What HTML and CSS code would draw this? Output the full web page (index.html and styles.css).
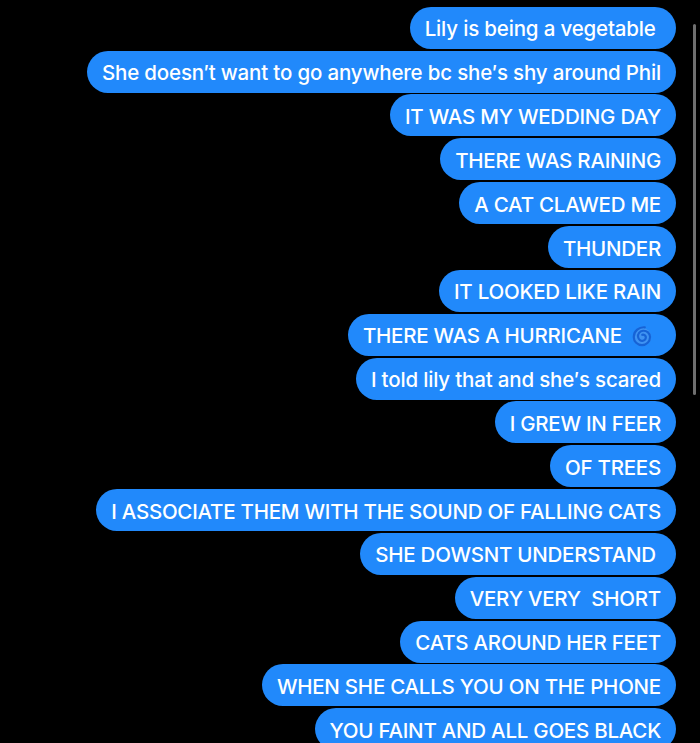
FILE: index.html
```html
<!DOCTYPE html>
<html lang="en">
<head>
    <meta charset="UTF-8">
    <meta name="viewport" content="width=device-width, initial-scale=1.0">
    <title>Messages</title>
    <link rel="stylesheet" href="styles.css">
</head>
<body>
    <div class="thread">
        <div class="bubble lower">Lily is being a vegetable </div>
        <div class="bubble lower">She doesn′t want to go anywhere bc she′s shy around Phil</div>
        <div class="bubble">IT WAS MY WEDDING DAY</div>
        <div class="bubble">THERE WAS RAINING</div>
        <div class="bubble">A CAT CLAWED ME</div>
        <div class="bubble">THUNDER</div>
        <div class="bubble">IT LOOKED LIKE RAIN</div>
        <div class="bubble">THERE WAS A HURRICANE<svg class="cyclone" viewBox="0 0 24 24" aria-hidden="true">
                <circle cx="12" cy="13" r="10" fill="#3f93f2"/>
                <path d="M15 2.500C9 2 3 6.500 3 13c0 5 4 9 9 9s8.800-4 8.800-8.800c0-4.200-3.500-7.300-7.800-6.900-3.600.4-5.800 3.400-5.300 6.700.5 3 3 4.700 5.500 4.200 2.100-.5 3.400-2.500 2.900-4.500-.5-1.700-2.300-2.500-3.800-2" fill="none" stroke="#1663d6" stroke-width="2.400" stroke-linecap="round"/>
            </svg></div>
        <div class="bubble lower">I told lily that and she′s scared</div>
        <div class="bubble">I GREW IN FEER</div>
        <div class="bubble">OF TREES</div>
        <div class="bubble">I ASSOCIATE THEM WITH THE SOUND OF FALLING CATS</div>
        <div class="bubble">SHE DOWSNT UNDERSTAND </div>
        <div class="bubble">VERY VERY  SHORT</div>
        <div class="bubble">CATS AROUND HER FEET</div>
        <div class="bubble">WHEN SHE CALLS YOU ON THE PHONE</div>
        <div class="bubble">YOU FAINT AND ALL GOES BLACK</div>
    </div>
    <div class="scrollbar"></div>
</body>
</html>
```

FILE: styles.css
```css
html, body {
    margin: 0;
    height: 743px;
    overflow: hidden;
}

body {
    background-color: #000;
    font-family: 'Inter', 'Liberation Sans', sans-serif;
}

.thread {
    display: flex;
    flex-direction: column;
    align-items: flex-end;
    gap: 1.85px;
    padding: 6.800px 24px 0 0;
}

.bubble {
    display: flex;
    align-items: center;
    flex-shrink: 0;
    box-sizing: border-box;
    height: 42px;
    padding: 2px 15px 0;
    border-radius: 21px;
    background-color: #2189fb;
    color: #fff;
    font-size: 20.500px;
    font-weight: 500;
    letter-spacing: -0.24px;
    white-space: pre;
}

.lower {
    letter-spacing: -0.17px;
}

.cyclone {
    width: 22px;
    height: 22px;
    margin-left: 9px;
    margin-right: 8px;
}

.scrollbar {
    position: absolute;
    top: 24px;
    left: 693px;
    width: 3px;
    height: 371px;
    border-radius: 2px;
    background-color: #6f6f6f;
}
```
